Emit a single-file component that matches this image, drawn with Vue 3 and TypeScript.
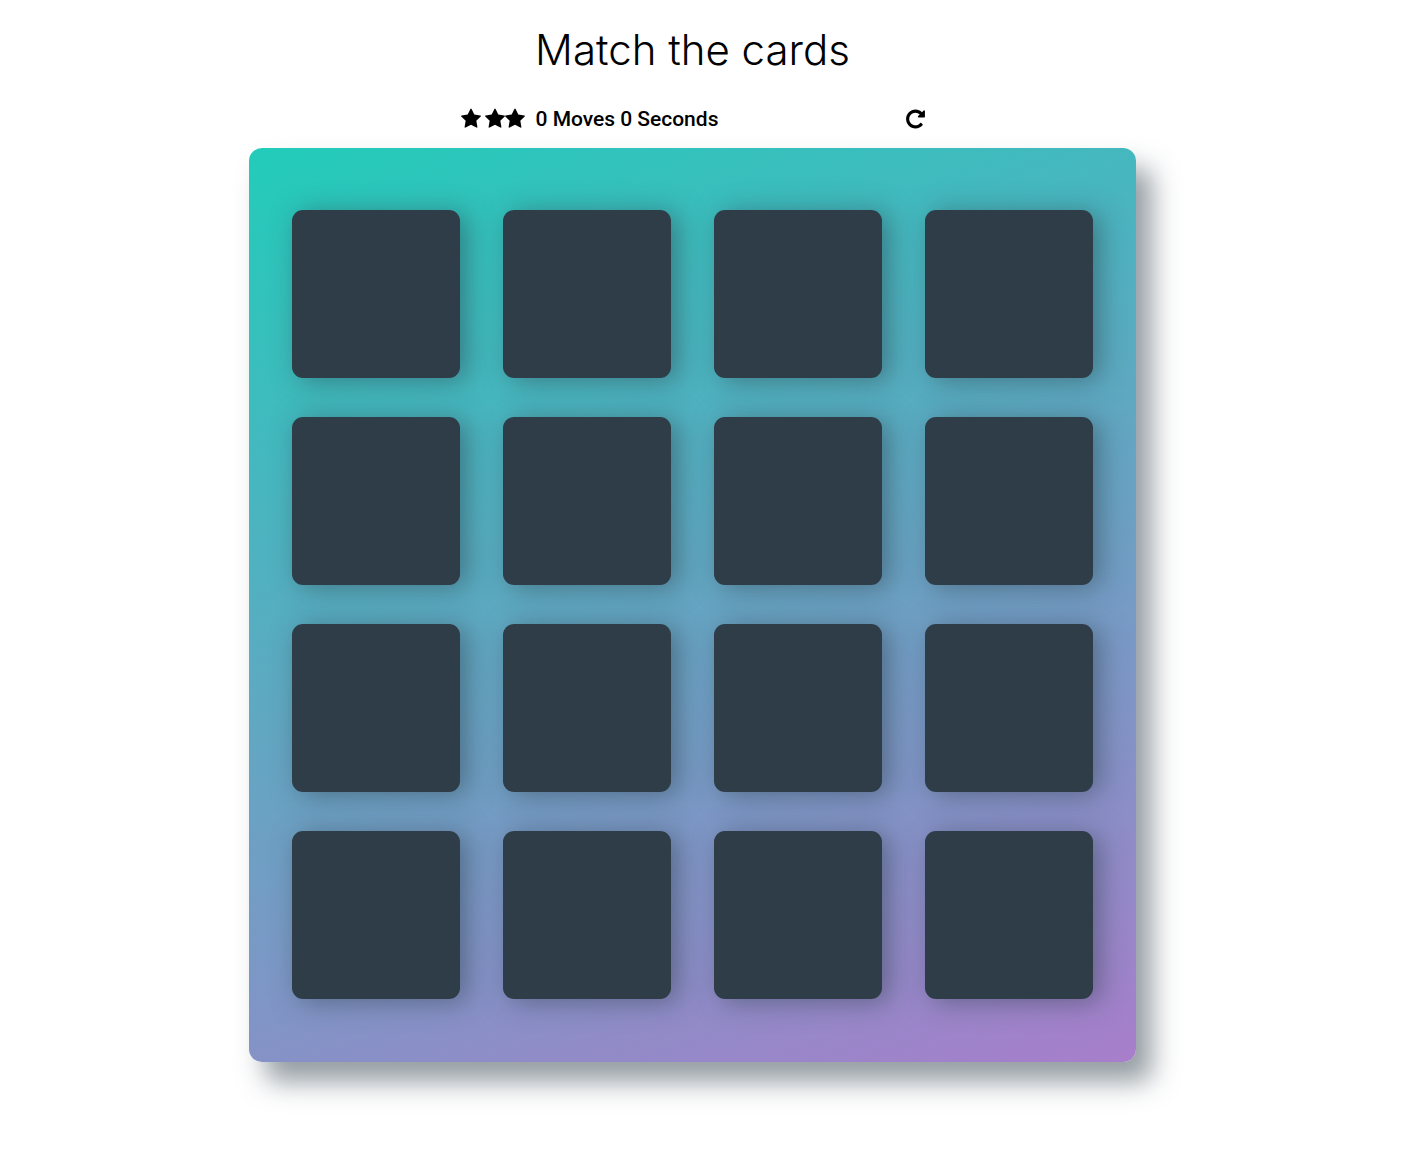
<script setup lang="ts">
import { ref } from 'vue'

const moves = ref(0)
const seconds = ref(0)
const cards = Array.from({ length: 16 }, (_, i) => i + 1)

const starPath =
  'M1728 647q0 22-26 48l-363 354 86 500q1 7 1 20 0 21-10.5 35.5t-30.5 14.5q-19 0-40-12l-449-236-449 236q-22 12-40 12-21 0-31.5-14.5t-10.5-35.5q0-6 2-20l86-500-364-354q-25-27-25-48 0-37 56-46l502-73 225-455q19-41 49-41t49 41l225 455 502 73q56 9 56 46z'

function restart(): void {
  moves.value = 0
  seconds.value = 0
}
</script>

<template>
  <main class="page">
    <h1 class="title">Match the cards</h1>

    <section class="score-panel">
      <ul class="stars" aria-label="Rating">
        <li v-for="n in 3" :key="n" class="star">
          <svg viewBox="64 0 1664 1792" aria-hidden="true"><path :d="starPath" /></svg>
        </li>
      </ul>
      <p class="stats">
        <span>{{ moves }} Moves</span>
        <span>{{ seconds }} Seconds</span>
      </p>
      <button class="restart" type="button" aria-label="Restart" @click="restart">
        <svg viewBox="128 0 1536 1792" aria-hidden="true">
          <path
            d="M1664 256v448q0 26-19 45t-45 19h-448q-42 0-59-40-17-39 14-69l138-138q-148-137-349-137-104 0-198.5 40.5t-163.5 109.5-109.5 163.5-40.5 198.5 40.5 198.5 109.5 163.5 163.5 109.5 198.5 40.5q119 0 225-52t179-147q7-10 23-12 15 0 25 9l137 138q9 8 9.5 20.5t-7.5 22.5q-109 132-264 204.5t-327 72.5q-156 0-298-61t-245-164-164-245-61-298 61-298 164-245 245-164 298-61q147 0 284.5 55.5t244.5 156.5l130-129q29-31 70-14 39 17 39 59z"
          />
        </svg>
      </button>
    </section>

    <section class="deck" aria-label="Cards">
      <button v-for="card in cards" :key="card" class="card" type="button" :aria-label="`Card ${card}`"></button>
    </section>
  </main>
</template>

<style>
body {
  background: #fff;
}
</style>

<style scoped>
.page {
  display: flex;
  flex-direction: column;
  align-items: center;
  box-sizing: border-box;
  padding: 24px 29px 112px 0;
  color: #000;
}

.title {
  margin: 0;
  font-family: Inter, 'Liberation Sans', sans-serif;
  font-size: 42px;
  font-weight: 300;
  line-height: 52px;
}

.score-panel {
  display: flex;
  align-items: center;
  width: 100%;
  max-width: 464px;
  height: 28px;
  margin: 29px 0 15px;
}

.stars {
  display: flex;
  margin: 0;
  padding: 0;
  list-style: none;
}

.star svg {
  display: block;
  width: 20px;
  height: 22px;
}

.star:first-child {
  margin-right: 4px;
}

.stats {
  display: flex;
  gap: 5px;
  margin: 0 0 0 11px;
  font-family: Roboto, 'Liberation Sans', sans-serif;
  font-size: 21px;
  font-weight: 500;
  line-height: 28px;
}

.restart {
  margin: 0 0 0 auto;
  padding: 0;
  border: 0;
  background: none;
  cursor: pointer;
}

.restart svg {
  display: block;
  width: 19px;
  height: 22px;
}

.deck {
  display: grid;
  grid-template-columns: repeat(4, 1fr);
  gap: 39px 43px;
  box-sizing: border-box;
  width: 100%;
  max-width: 887px;
  padding: 62px 43px 63px;
  border-radius: 13px;
  background: linear-gradient(160deg, #22ccba 0%, #a87ecb 100%);
  box-shadow: 16px 20px 27px 0 rgba(46, 61, 73, 0.5);
}

.card {
  aspect-ratio: 1;
  padding: 0;
  border: 0;
  border-radius: 11px;
  background: #2f3d48;
  box-shadow: 7px 3px 27px 0 rgba(46, 61, 73, 0.5);
  cursor: pointer;
}
</style>
